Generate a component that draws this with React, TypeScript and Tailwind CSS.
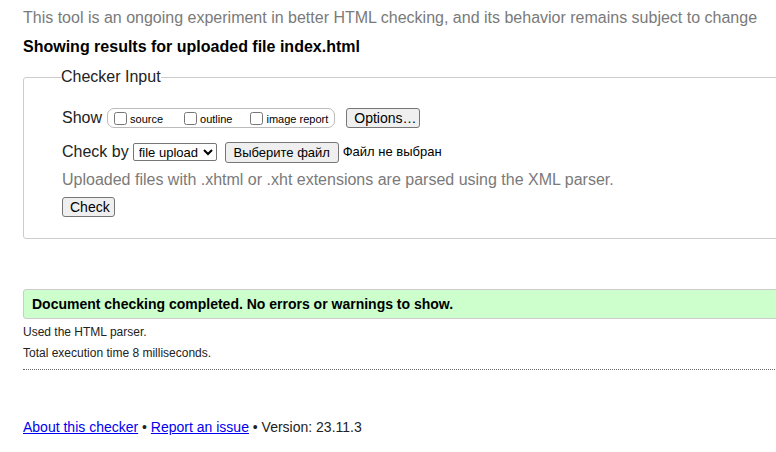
import React from 'react';

const font = "font-['Liberation_Sans',Arial,sans-serif]";

const Btn: React.FC<{ children: React.ReactNode; className?: string }> = ({ children, className = '' }) => (
  <button
    className={`h-[20px] px-[7px] border border-[#767676] rounded-[3px] bg-[#efefef] text-black leading-none ${className}`}
  >
    {children}
  </button>
);

const Check: React.FC<{ label: string; className?: string }> = ({ label, className = '' }) => (
  <label className={`flex items-center ${className}`}>
    <input type="checkbox" className="m-0 w-[13px] h-[13px]" />
    <span className="ml-[3px] text-[11px] leading-none mt-[2px]">{label}</span>
  </label>
);

export default function App() {
  return (
    <div className={`w-[776px] h-[452px] overflow-hidden bg-white text-black ${font}`}>
      <div className="ml-[23px] w-[800px]">
        <p className="mt-[9px] text-[16px] leading-[18px] text-[#7a7a7a] whitespace-nowrap">
          This tool is an ongoing experiment in better HTML checking, and its behavior remains subject to change
        </p>
        <h2 className="mt-[11px] text-[16px] leading-[18px] font-bold whitespace-nowrap">
          Showing results for uploaded file index.html
        </h2>

        <fieldset className="mt-[12px] border border-[#cccccc] rounded-[3px] pl-[38px] pt-[21px] pb-[20px]">
          <legend className="-ml-[1px] text-[16px] leading-[18px] text-[#222]">Checker Input</legend>

          <div className="flex items-center h-[22px]">
            <span className="text-[16px] text-[#222]">Show</span>
            <div className="ml-[5px] flex items-center h-[20px] border border-[#bbbbbb] rounded-[7px] pl-[6px] pr-[6px]">
              <Check label="source" />
              <Check label="outline" className="ml-[21px]" />
              <Check label="image report" className="ml-[18px]" />
            </div>
            <Btn className="ml-[11px] text-[14px] w-[74px]">Options…</Btn>
          </div>

          <div className="mt-[12px] flex items-center h-[22px]">
            <span className="text-[16px] text-[#222]">Check by</span>
            <select className="ml-[4px] h-[18px] w-[84px] border border-[#767676] rounded-[2px] text-[13px] leading-none pl-[1px] text-black">
              <option>file upload</option>
            </select>
            <Btn className="ml-[8px] text-[13px] h-[21px] w-[114px]">Выберите файл</Btn>
            <span className="ml-[4px] text-[13px]">Файл не выбран</span>
          </div>

          <p className="mt-[8px] text-[16px] leading-[18px] text-[#7a7a7a] whitespace-nowrap">
            Uploaded files with .xhtml or .xht extensions are parsed using the XML parser.
          </p>

          <div className="mt-[7px] flex items-center h-[22px]">
            <Btn className="text-[14px] w-[53px]">Check</Btn>
          </div>
        </fieldset>

        <div className="mt-[50px] h-[30px] flex items-center bg-[#ccffcc] border border-[#cccccc] rounded-l-[3px] pl-[8px]">
          <span className="text-[14px] font-bold">Document checking completed. No errors or warnings to show.</span>
        </div>

        <p className="mt-[6px] text-[12px] leading-[15px] text-[#222]">Used the HTML parser.</p>
        <p className="mt-[6px] text-[12px] leading-[15px] text-[#222]">Total execution time 8 milliseconds.</p>
        <div className="mt-[8px] border-t border-dotted border-[#666]" />

        <p className="mt-[49px] text-[14px] leading-[16px] text-[#222]">
          <a className="text-[#0000ee] underline">About this checker</a>
          {' • '}
          <a className="text-[#0000ee] underline">Report an issue</a>
          {' • Version: 23.11.3'}
        </p>
      </div>
    </div>
  );
}
